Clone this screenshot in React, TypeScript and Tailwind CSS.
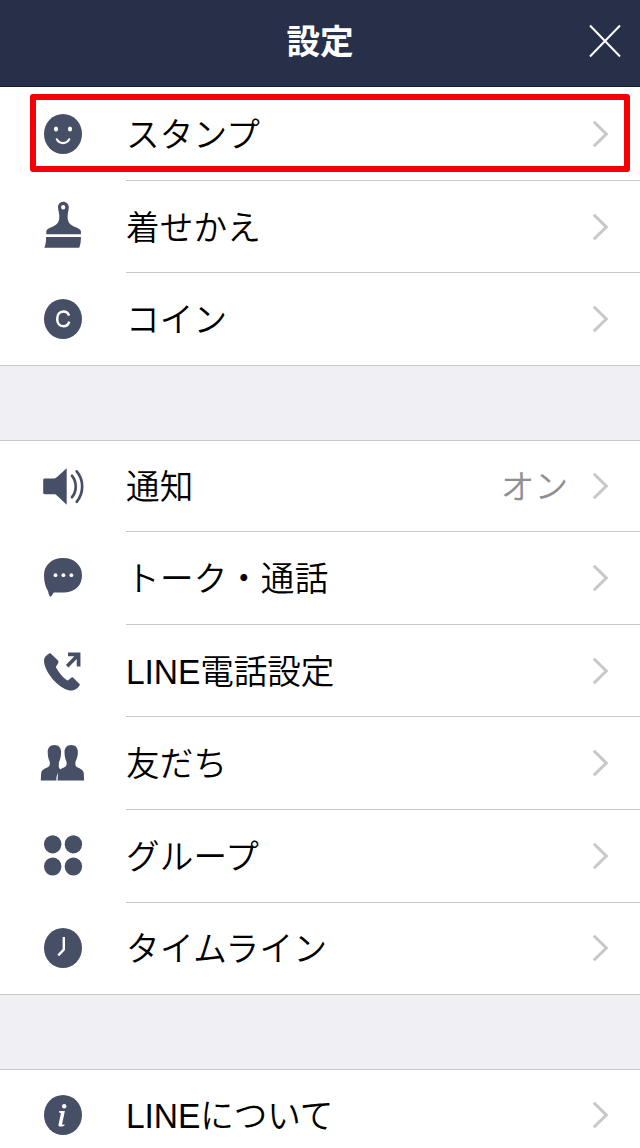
import type { ReactNode } from "react";

const FONT =
  "font-['Liberation_Sans','Noto_Sans_CJK_JP',sans-serif]";

function Icon({ children }: { children: ReactNode }) {
  return (
    <svg viewBox="0 0 44 48" className="h-12 w-11 shrink-0 overflow-visible" fill="#474f66">
      {children}
    </svg>
  );
}

function Disc() {
  return <ellipse cx="22" cy="24" rx="19" ry="20" />;
}

const smile = (
  <Icon>
    <Disc />
    <ellipse cx="15" cy="19" rx="2.1" ry="2.5" fill="#fff" />
    <ellipse cx="29" cy="19" rx="2.1" ry="2.5" fill="#fff" />
    <path d="M15.800 29.300c2.800 5 9.600 5 12.400 0" fill="none" stroke="#fff" strokeWidth="2.200" strokeLinecap="round" />
  </Icon>
);

const brush = (
  <Icon>
    <path
      fillRule="evenodd"
      d="M22.200-1.300c-3 0-5.200 2.300-5.200 5.300 0 3 1.200 5.500 1.300 9 .1 4-.5 6.200-2.800 8.200-3.500 3-9.100 3.600-10.200 6.800v3.200h34.600V28c-1.100-3.200-7-3.800-10.500-6.800-2.300-2-2.900-4.200-2.800-8.200.1-3.500 1.200-6 1.200-9 0-3-2.600-5.300-5.600-5.300zm0 3.200a2.100 2.300 0 1 1 0 4.600 2.100 2.300 0 0 1 0-4.600z"
    />
    <path d="M5.100 34.100h34.800c0 4-.3 7.500-1.700 10.700H3.300c1.500-3.300 1.800-6.700 1.800-10.700z" />
  </Icon>
);

const coin = (
  <Icon>
    <Disc />
    <path d="M28 20.600c-.8-2.700-2.900-4.200-5.600-4.200-3.900 0-6.200 3-6.200 7.500s2.300 7.400 6.200 7.400c3 0 5.100-1.800 5.800-4.700" fill="none" stroke="#fff" strokeWidth="2.500" />
  </Icon>
);

const speaker = (
  <Icon>
    <path d="M3.800 16.400H13c1.500 0 2-.5 3-1.300l9.700-8.900v36.600L15.900 33.500c-.9-.8-1.500-1.200-2.900-1.200H3.800c-1.100 0-1.600-.6-1.600-1.700V18c0-1 .5-1.600 1.600-1.600z" />
    <g fill="none" stroke="#474f66" strokeWidth="2.700" strokeLinecap="round">
      <path d="M31 13.800c5 6 5 15.400 0 21.400" />
      <path d="M35.700 9.400c7.300 8.600 7.300 21.800 0 30.400" />
    </g>
  </Icon>
);

const chat = (
  <Icon>
    <path d="M22 4C10.500 4 3 11.300 3 21.200c0 6.500 1.200 11 4.200 16.400.3 2.400 1 4.400 2.200 5.200 1.200-.6 2.100-2.600 3.400-4.400 3 .2 7.200.2 11 0C34 38 41 31.600 41 21.200 41 11.300 33.500 4 22 4z" />
    <g fill="#fff">
      <circle cx="14.500" cy="21.200" r="1.900" />
      <circle cx="22.400" cy="21.200" r="1.900" />
      <circle cx="30.400" cy="21.200" r="1.900" />
    </g>
  </Icon>
);

const phone = (
  <Icon>
    <path d="M9.200 6C5.500 8 3 10.300 3 14c.2 10.500 14.500 28 26 29.500 5 .4 8-2.200 10-6l-6.800-6.700c-.8-.7-1.500-.6-2.300.1l-2.300 2.100c-.7.600-1.300.6-2.100 0-4.100-2.900-7.700-7.400-10.200-11.900-.5-.9-.3-1.600.3-2.300l1.600-2.800c.5-.9.400-1.600-.2-2.500z" />
    <path d="M27 7.400h10.600v12M37.300 7.800 26.200 19.300" fill="none" stroke="#474f66" strokeWidth="3.700" />
  </Icon>
);

const friends = (
  <Icon>
    <path d="M13.400 6c-4.300 0-6.700 2.800-6.700 7.100 0 4.200.8 7.300 2.100 9.900.2 3.200-.3 4.400-2.600 5.500C2.900 30 .4 31.200.1 34.400l-.3 7.200h15.600c.1-5.700.9-8 5-10.300-1.100-1.100-2.300-1.900-2.500-3-.2-1.700-.1-3.400.1-5.200 1.300-2.600 2.100-5.800 2.100-10C20.100 8.800 17.700 6 13.400 6z" />
    <path d="M30.200 6c-4.300 0-6.700 2.800-6.700 7.100 0 4.200.8 7.300 2.100 9.900.2 3.200-.3 4.400-2.600 5.500-3.300 1.500-5.800 2.700-6.100 5.900l-.3 7.200h26.500l-.3-7.200c-.3-3.200-2.800-4.400-6.100-5.900-2.300-1.100-2.500-2.300-2.300-5.500 1.300-2.600 2.500-5.700 2.500-9.900 0-4.300-2.400-7.100-6.700-7.100z" />
  </Icon>
);

const group = (
  <Icon>
    <ellipse cx="11.700" cy="12.300" rx="8.700" ry="9.100" />
    <ellipse cx="32.400" cy="12.300" rx="8.700" ry="9.100" />
    <ellipse cx="11.700" cy="34.500" rx="8.700" ry="9.100" />
    <ellipse cx="32.400" cy="34.500" rx="8.700" ry="9.100" />
  </Icon>
);

const clock = (
  <Icon>
    <Disc />
    <path d="M22.800 13v12.500l-5.500 5.800" fill="none" stroke="#fff" strokeWidth="2.400" />
  </Icon>
);

const info = (
  <Icon>
    <Disc />
    <g fill="#fff">
      <ellipse cx="23.200" cy="15.300" rx="2.200" ry="2.300" />
      <path d="M18.300 20h5.600l-2.800 13c-.2.900.6.900 2.500.2l-.2 1.200c-1.500.8-2.800 1.200-4.100 1.200-1.500 0-2-.9-1.700-2.300l2.200-10.600c.2-.8-.3-1.100-1.700-1.300z" />
    </g>
  </Icon>
);

type RowProps = {
  icon: ReactNode;
  label: string;
  value?: string;
  height: string;
  tracking?: string;
  last?: boolean;
  highlighted?: boolean;
};

function Row({ icon, label, value, height, tracking = "tracking-[0.2px]", last, highlighted }: RowProps) {
  return (
    <li className={`relative flex shrink-0 pl-[41px] ${height}`}>
      <div className="flex w-[85px] shrink-0 items-center pb-px">{icon}</div>
      <div
        className={`flex min-w-0 flex-1 items-center justify-between pr-[31px] ${
          last ? "pb-px" : "border-b border-[#c8c7cc]"
        }`}
      >
        <span
          className={`origin-left scale-y-[1.03] pt-1 text-[33.6px] leading-none font-[350] whitespace-nowrap text-black ${tracking}`}
        >
          {label}
        </span>
        <span className="flex items-center gap-[24px]">
          {value && <span className="pt-1 text-[33.6px] leading-none font-[350] text-[#8e8e93]">{value}</span>}
          <svg viewBox="0 0 17 28" className="h-7 w-[17px]" fill="none" stroke="#c7c7cc" strokeWidth="3">
            <path d="M1.800 1.800 14.300 14 1.800 26.300" />
          </svg>
        </span>
      </div>
      {highlighted && (
        <div className="pointer-events-none absolute top-[7px] right-[10px] bottom-[9px] left-[30px] rounded-[3px] border-6 border-[#f60006]" />
      )}
    </li>
  );
}

function Gap() {
  return <div className="h-[76px] shrink-0 border-y border-[#c8c7cc] bg-[#efeff4]" />;
}

export default function App() {
  return (
    <main lang="ja" className={`flex h-[1148px] w-[640px] flex-col overflow-hidden bg-white ${FONT}`}>
      <header className="grid h-[87px] shrink-0 grid-cols-[1fr_auto_1fr] items-center border-b border-[#131d30] bg-[#283049] pb-1">
        <h1 className="col-start-2 pt-1 text-[33.6px] leading-none font-bold text-white">設定</h1>
        <button aria-label="閉じる" className="mr-[19px] justify-self-end">
          <svg viewBox="0 0 32 34" className="block h-[34px] w-8" fill="none" stroke="#fff" strokeWidth="2">
            <path d="M1 1.500 31 32.500M31 1.500 1 32.500" />
          </svg>
        </button>
      </header>
      <ul className="flex flex-col">
        <Row icon={smile} label="スタンプ" height="h-[94px]" highlighted />
        <Row icon={brush} label="着せかえ" height="h-[92px]" />
        <Row icon={coin} label="コイン" height="h-[92px]" last />
      </ul>
      <Gap />
      <ul className="flex flex-col">
        <Row icon={speaker} label="通知" value="オン" height="h-[91px]" />
        <Row icon={chat} label="トーク・通話" height="h-[93px]" tracking="tracking-[0.3px]" />
        <Row icon={phone} label="LINE電話設定" height="h-[92px]" tracking="tracking-[-0.1px]" />
        <Row icon={friends} label="友だち" height="h-[93px]" />
        <Row icon={group} label="グループ" height="h-[93px]" />
        <Row icon={clock} label="タイムライン" height="h-[91px]" tracking="tracking-[0.4px]" last />
      </ul>
      <Gap />
      <ul className="flex flex-col">
        <Row icon={info} label="LINEについて" height="h-[91px]" tracking="tracking-[-0.1px]" last />
      </ul>
    </main>
  );
}
